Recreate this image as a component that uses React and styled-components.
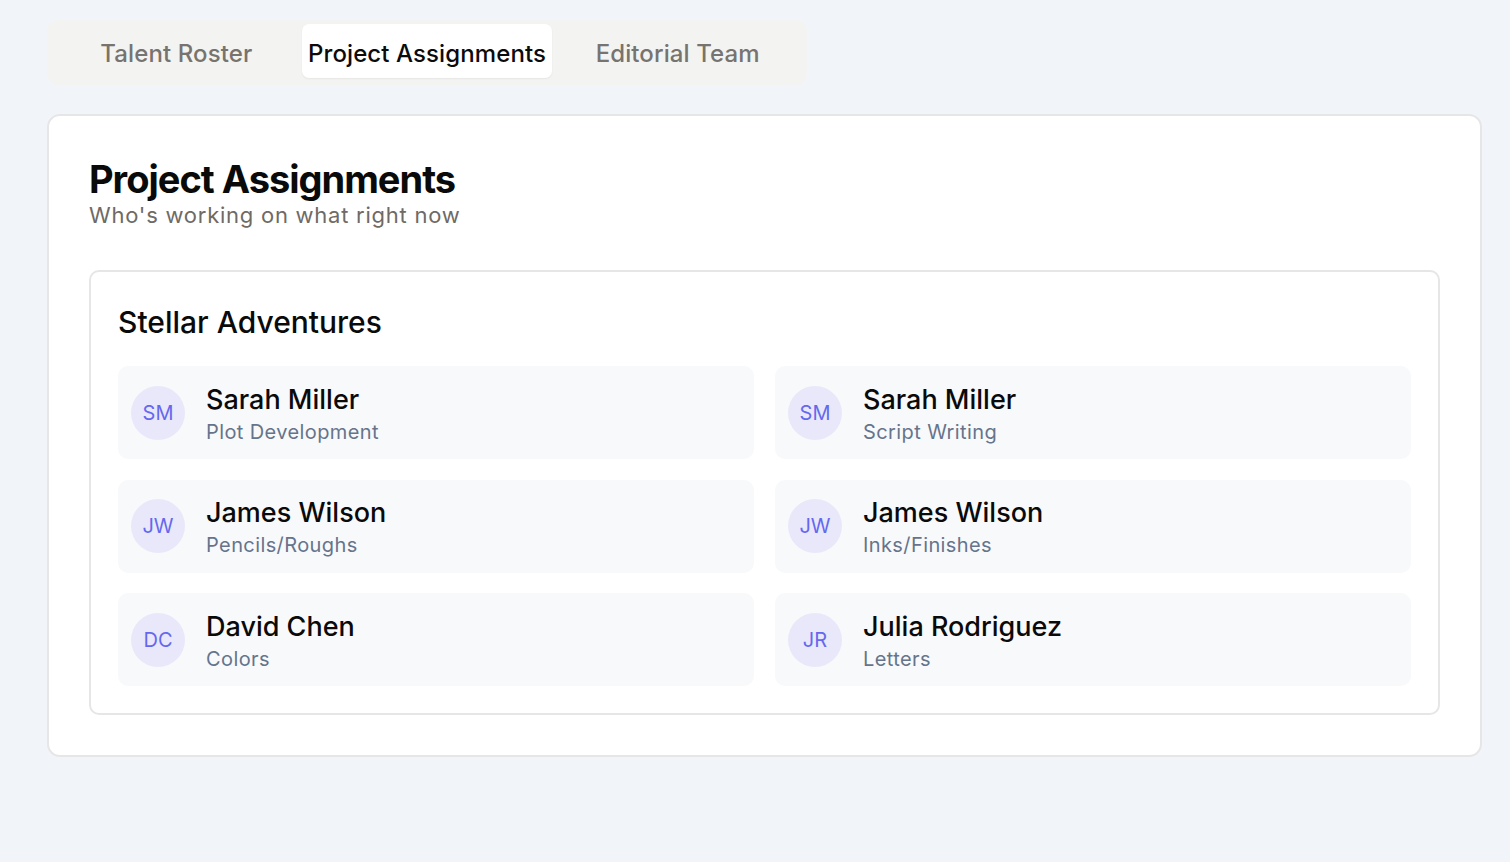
import React from 'react'
import styled, { createGlobalStyle } from 'styled-components'

const GlobalStyle = createGlobalStyle`
  body {
    margin: 0;
    background: #f1f4f9;
    font-family: Inter, "Noto Sans", "Liberation Sans", sans-serif;
    color: #111111;
  }
`

const Page = styled.div`
  padding: 20px 28px 40px 47px;
  min-height: 862px;
  box-sizing: border-box;
`

const TabList = styled.div`
  display: grid;
  grid-template-columns: repeat(3, 1fr);
  width: 760px;
  box-sizing: border-box;
  padding: 4px 4px 7px;
  background: #f3f3f2;
  border-radius: 10px;
`

const Tab = styled.button`
  height: 54px;
  padding: 4px 0 0;
  border: none;
  border-radius: 7px;
  background: ${p => (p.active ? '#ffffff' : 'transparent')};
  box-shadow: ${p => (p.active ? '0 1px 2px rgba(0,0,0,0.06)' : 'none')};
  color: ${p => (p.active ? '#0b0b0b' : '#77736f')};
  font-family: inherit;
  font-size: 24px;
  font-weight: 500;
  letter-spacing: 0.1px;
  cursor: pointer;
`

const Card = styled.section`
  margin-top: 29px;
  background: #ffffff;
  border: 2px solid #e6e6e6;
  border-radius: 13px;
  padding: 40px;
`

const Title = styled.h1`
  margin: 0;
  font-size: 38px;
  line-height: 46px;
  font-weight: 700;
  letter-spacing: -1px;
  color: #0a0a0a;
`

const Subtitle = styled.p`
  margin: -2px 0 0;
  font-size: 22px;
  line-height: 30px;
  color: #6e6a66;
  letter-spacing: 0.75px;
`

const Project = styled.div`
  margin-top: 40px;
  border: 2px solid #e6e6e6;
  border-radius: 10px;
  padding: 30px 27px 27px;
`

const ProjectName = styled.h2`
  margin: 0 0 24px;
  font-size: 30px;
  line-height: 40px;
  font-weight: 500;
  color: #0a0a0a;
`

const Grid = styled.div`
  display: grid;
  grid-template-columns: 1fr 1fr;
  column-gap: 21px;
  row-gap: 20.5px;
`

const Row = styled.div`
  display: flex;
  align-items: center;
  gap: 21px;
  height: 93px;
  padding: 0 13px;
  background: #f8f9fb;
  border-radius: 10px;
`

const Avatar = styled.div`
  width: 54px;
  height: 54px;
  border-radius: 50%;
  background: #e8e8fa;
  color: #6568ee;
  display: flex;
  align-items: center;
  justify-content: center;
  font-size: 20px;
  flex-shrink: 0;
`

const Info = styled.div`
  display: flex;
  flex-direction: column;
  padding-top: 1px;
`

const Name = styled.div`
  font-size: 27px;
  line-height: 37px;
  font-weight: 500;
  color: #0a0a0a;
`

const Role = styled.div`
  font-size: 20px;
  line-height: 28px;
  color: #66748b;
  letter-spacing: 0.4px;
`

const assignments = [
  { name: 'Sarah Miller', role: 'Plot Development' },
  { name: 'Sarah Miller', role: 'Script Writing' },
  { name: 'James Wilson', role: 'Pencils/Roughs' },
  { name: 'James Wilson', role: 'Inks/Finishes' },
  { name: 'David Chen', role: 'Colors' },
  { name: 'Julia Rodriguez', role: 'Letters' }
]

const initials = name => name.split(' ').map(w => w[0]).join('')

const App = () => {
  return (
    <Page>
      <GlobalStyle />
      <TabList>
        <Tab>Talent Roster</Tab>
        <Tab active>Project Assignments</Tab>
        <Tab>Editorial Team</Tab>
      </TabList>
      <Card>
        <Title>Project Assignments</Title>
        <Subtitle>Who's working on what right now</Subtitle>
        <Project>
          <ProjectName>Stellar Adventures</ProjectName>
          <Grid>
            {assignments.map((a, i) => (
              <Row key={i}>
                <Avatar>{initials(a.name)}</Avatar>
                <Info>
                  <Name>{a.name}</Name>
                  <Role>{a.role}</Role>
                </Info>
              </Row>
            ))}
          </Grid>
        </Project>
      </Card>
    </Page>
  )
}

export default App
